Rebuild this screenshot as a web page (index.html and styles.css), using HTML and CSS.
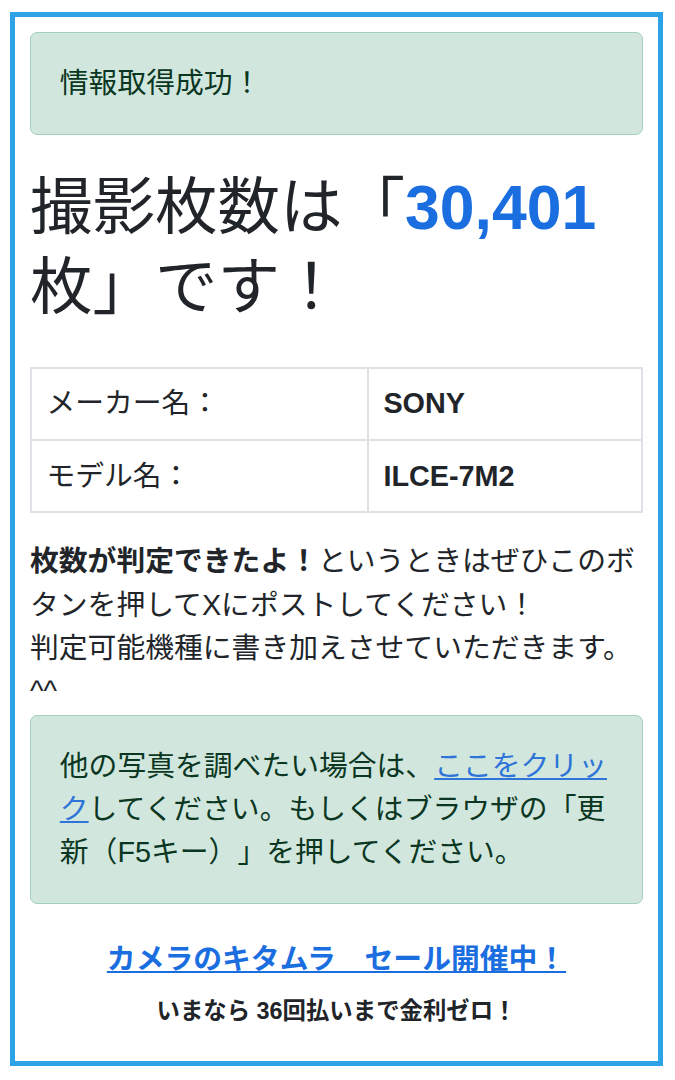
FILE: index.html
```html
<!DOCTYPE html>
<html lang="ja">
<head>
<meta charset="utf-8">
<title>撮影枚数</title>
<link rel="stylesheet" href="styles.css">
</head>
<body>
<div class="frame">
  <div class="alert">情報取得成功！</div>
  <h1 class="count">撮影枚数は「<span class="num">30,401</span>枚」です！</h1>
  <table class="info">
    <colgroup><col class="col-label"><col class="col-value"></colgroup>
    <tr><td>メーカー名：</td><td class="value">SONY</td></tr>
    <tr><td>モデル名：</td><td class="value">ILCE-7M2</td></tr>
  </table>
  <p class="note"><strong>枚数が判定できたよ！</strong>というときはぜひこのボタンを押してXにポストしてください！<br>判定可能機種に書き加えさせていただきます。^^</p>
  <div class="alert">他の写真を調べたい場合は、<a class="link" href="#">ここをクリック</a>してください。もしくはブラウザの「更新（F5キー）」を押してください。</div>
  <div class="promo">
    <p class="promo-title"><a class="promo-link" href="#">カメラのキタムラ　セール開催中！</a></p>
    <p class="promo-sub">いまなら 36回払いまで金利ゼロ！</p>
  </div>
</div>
</body>
</html>
```
FILE: styles.css
```css
html, body {
  margin: 0;
  padding: 0;
  background: #ffffff;
}
body {
  font-family: "Liberation Sans", "Noto Sans CJK JP", sans-serif;
  font-size: 28.8px;
  line-height: 1.5;
  color: #212529;
  text-spacing-trim: space-all;
}
.frame {
  box-sizing: border-box;
  width: 653px;
  margin: 12px 0 0 10px;
  border: 5px solid #2ea2e6;
  padding: 15px;
}
.alert {
  background: #d1e7dd;
  border: 1.8px solid #a3cfbb;
  border-radius: 7px;
  padding: 28.8px;
  color: #0a3622;
  margin-bottom: 28.8px;
}
.count {
  font-size: 62.5px;
  line-height: 80px;
  font-weight: 400;
  margin: 0 0 40px;
  padding-top: 3px;
  color: #212529;
}
.num {
  color: #1a6ee0;
  font-weight: 700;
}
.info {
  width: 100%;
  border-collapse: collapse;
  table-layout: fixed;
  margin-bottom: 27px;
}
.col-label {
  width: 337px;
}
.info td {
  border: 2px solid #dee2e6;
  padding: 13.6px 14.4px;
  line-height: 43.2px;
}
.info .value {
  font-weight: 700;
}
.note {
  margin: 0 0 2px;
}
.note strong {
  font-weight: 700;
}
.link {
  color: #2f74d8;
  text-decoration: underline;
}
.promo {
  margin-top: 34px;
  text-align: center;
}
.promo-title {
  margin: 0 0 13px;
  font-weight: 700;
}
.promo-link {
  color: #1a6ee0;
  text-decoration: underline;
}
.promo-sub {
  margin: 0 0 16px;
  font-size: 23.4px;
  font-weight: 700;
}
```
